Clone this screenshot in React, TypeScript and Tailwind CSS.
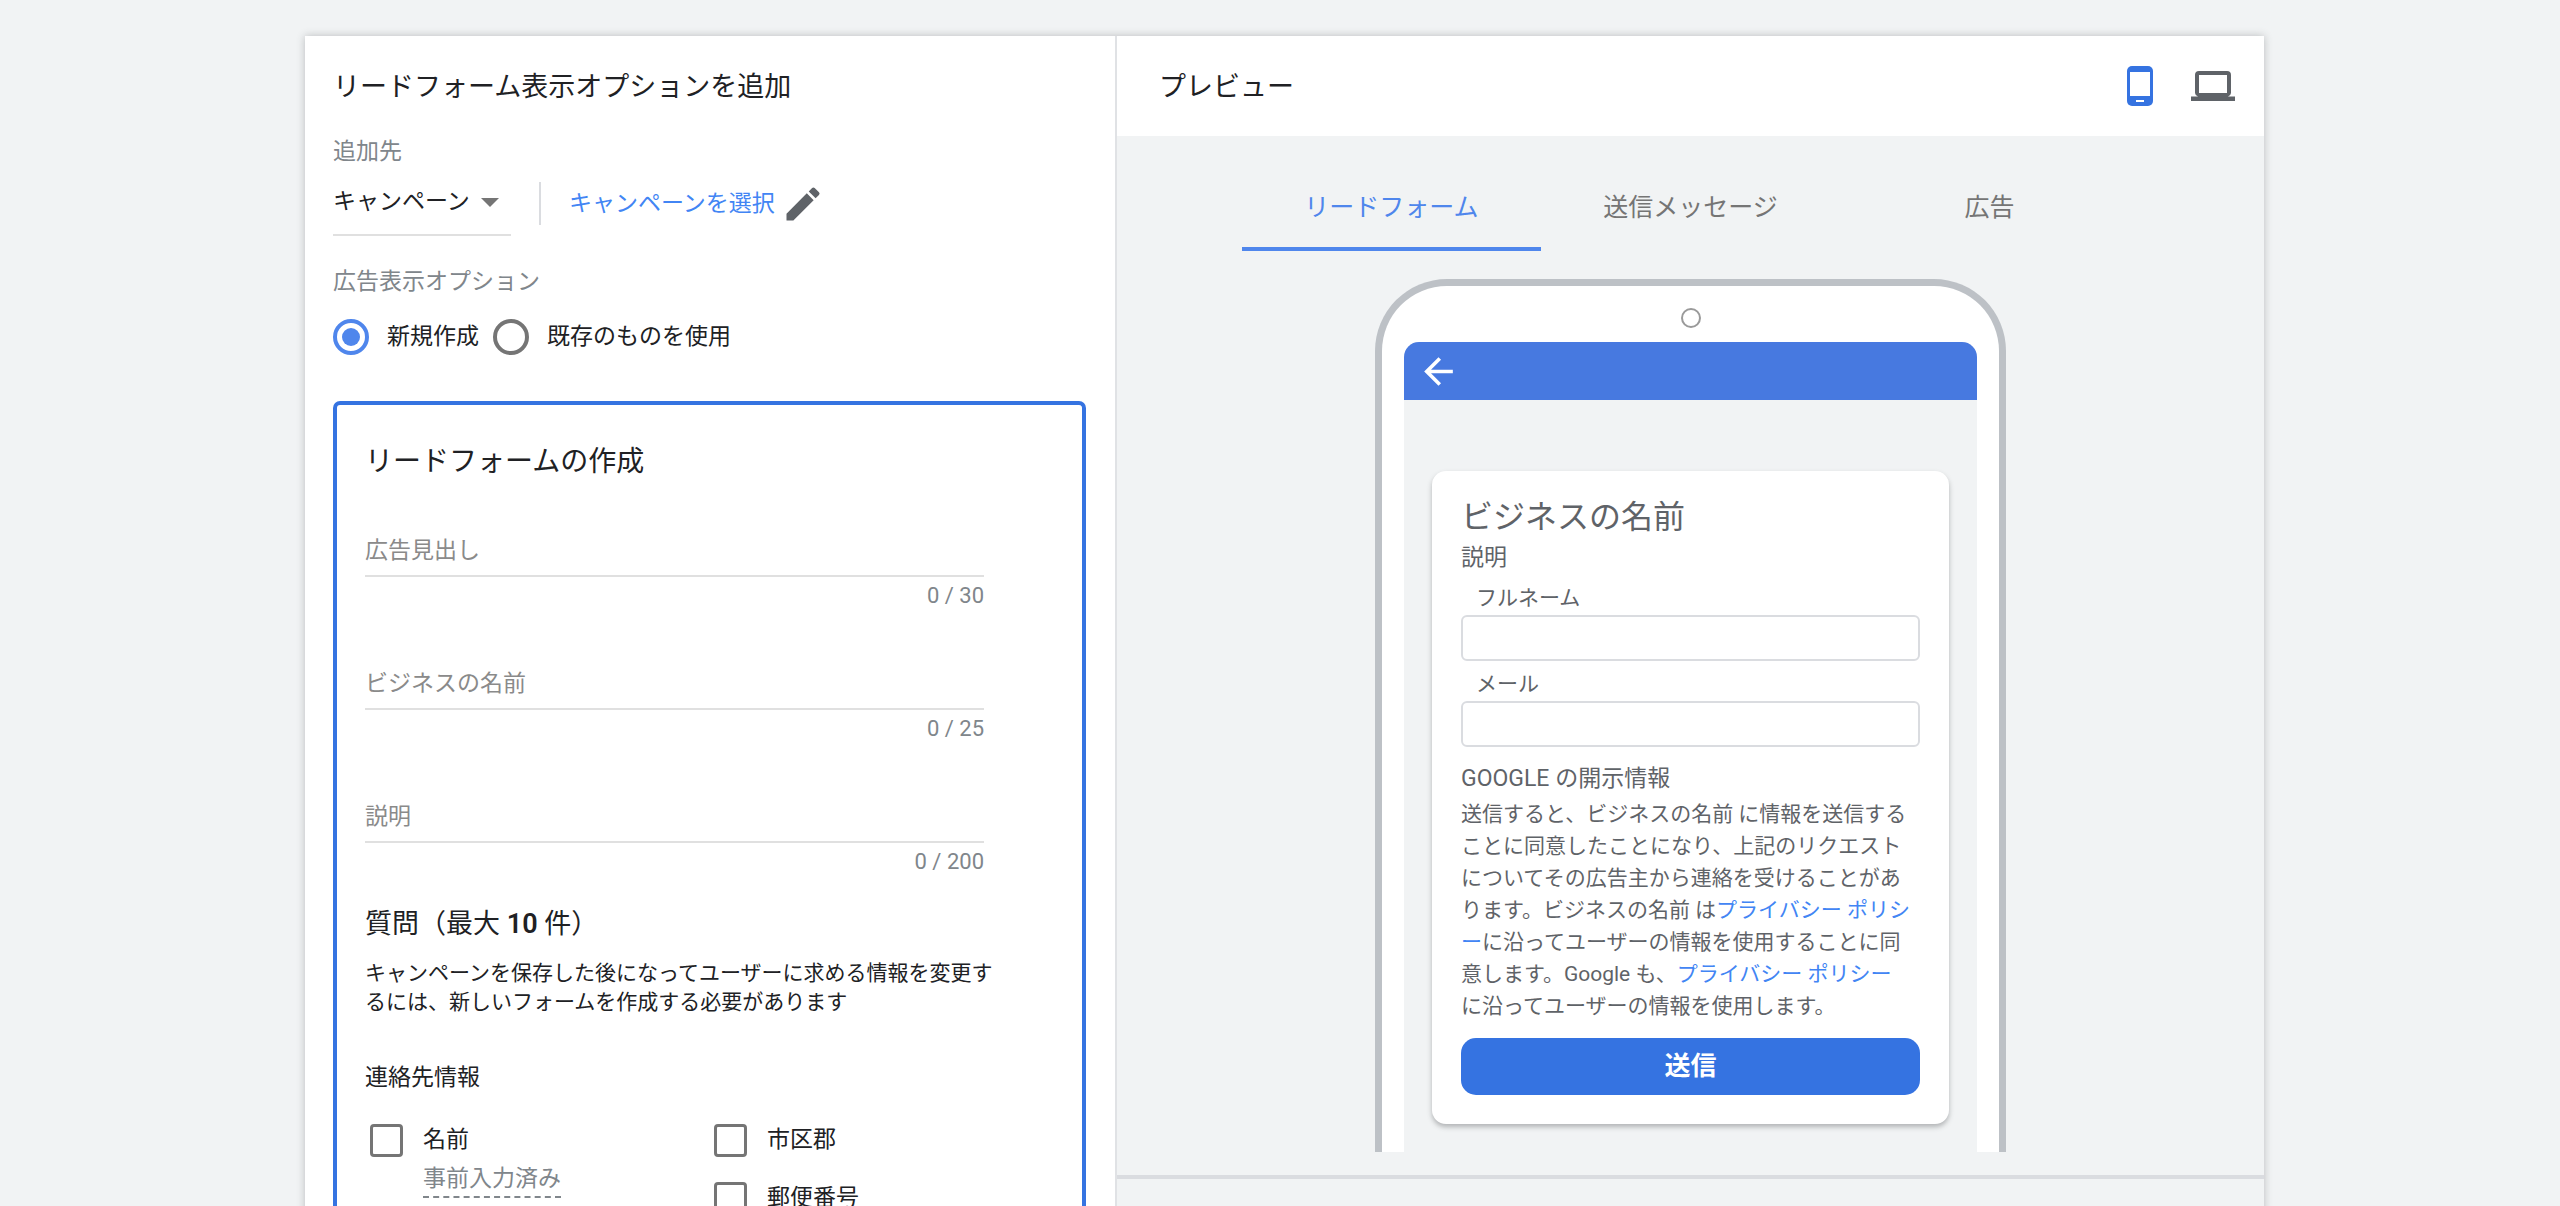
import { useId, useState } from "react";

function TextField({ label, max }: { label: string; max: number }) {
  const [value, setValue] = useState("");
  return (
    <div className="mb-[53px] w-[619px] max-w-full">
      <input
        aria-label={label}
        placeholder={label}
        maxLength={max}
        value={value}
        onChange={(e) => setValue(e.target.value)}
        className="block h-[46px] w-full border-b-2 border-[#e0e0e0] bg-transparent pb-[6px] text-[23px] outline-none placeholder:text-[#8a8a8a]"
      />
      <div className="pt-1 text-right text-[22px] leading-[30px] text-[#80868b]">
        {value.length} / {max}
      </div>
    </div>
  );
}

function Check({ label, hint }: { label: string; hint?: string }) {
  const id = useId();
  return (
    <div className="flex items-start gap-5">
      <input
        id={id}
        type="checkbox"
        className="size-[33px] shrink-0 appearance-none rounded-[4px] border-[3px] border-[#757575] checked:bg-[#3573e1]"
      />
      <div className="flex flex-col items-start">
        <label htmlFor={id} className="text-[23px] leading-8">
          {label}
        </label>
        {hint && (
          <span className="mt-[6px] border-b-2 border-dashed border-[#80868b] text-[23px] leading-[34px] text-[#80868b]">
            {hint}
          </span>
        )}
      </div>
    </div>
  );
}

function Radio({ label, checked }: { label: string; checked?: boolean }) {
  return (
    <label className="flex items-center gap-[18px] text-[23px] leading-9">
      <input
        type="radio"
        name="extension"
        defaultChecked={checked}
        className="size-9 shrink-0 appearance-none rounded-full border-4 border-[#757575] bg-clip-content p-[5px] checked:border-[#4f86ec] checked:bg-[#4f86ec]"
      />
      {label}
    </label>
  );
}

function PhoneField({ label }: { label: string }) {
  const id = useId();
  return (
    <div className="mb-2">
      <label htmlFor={id} className="block pb-[2px] pl-[15px] text-[21px] leading-[30px]">
        {label}
      </label>
      <input
        id={id}
        className="block h-[46px] w-full rounded-[6px] border-2 border-[#dadce0] bg-white px-3 text-[21px] outline-none"
      />
    </div>
  );
}

function FormPanel() {
  return (
    <section className="w-[812px] shrink-0 border-r-2 border-[#e0e2e5] bg-white pt-8 pr-[29px] pl-7">
      <h1 className="text-[27px] leading-[38px]">リードフォーム表示オプションを追加</h1>
      <div className="mt-7 text-[23px] leading-9 text-[#80868b]">追加先</div>

      <div className="mt-3 flex items-start">
        <div className="relative h-[54px] w-[178px] border-b-2 border-[#e0e0e0]">
          <select
            aria-label="追加先"
            className="h-10 w-full appearance-none bg-transparent text-[23px] outline-none"
          >
            <option>キャンペーン</option>
          </select>
          <svg
            viewBox="0 0 18 9"
            className="pointer-events-none absolute top-4 right-[12px] h-[9px] w-[18px] fill-[#757575]"
          >
            <path d="M0 0h18L9 9z" />
          </svg>
        </div>
        <div className="ml-7 h-[43px] w-[2px] bg-[#dadce0]" />
        <a href="#campaign" className="ml-7 flex items-center gap-[6px] text-[23px] leading-[42px] text-[#4285f4]">
          キャンペーンを選択
          <svg viewBox="0 0 24 24" className="size-[44px] fill-[#5f6368]">
            <path d="M3 17.25V21h3.75L17.81 9.94l-3.75-3.75L3 17.25zM20.71 7.04a1 1 0 0 0 0-1.41l-2.34-2.34a1 1 0 0 0-1.41 0l-1.83 1.83 3.75 3.75 1.83-1.83z" />
          </svg>
        </a>
      </div>

      <div className="mt-7 text-[23px] leading-9 text-[#80868b]">広告表示オプション</div>
      <div className="mt-[19px] flex gap-[14px]">
        <Radio label="新規作成" checked />
        <Radio label="既存のものを使用" />
      </div>

      <div className="mt-[46px] rounded-t-[7px] border-4 border-b-0 border-[#3573e1] px-7 pt-[37px] pb-10">
        <h2 className="mb-[49px] text-[28px] leading-10">リードフォームの作成</h2>
        <TextField label="広告見出し" max={30} />
        <TextField label="ビジネスの名前" max={25} />
        <TextField label="説明" max={200} />
        <h3 className="-mt-[25px] text-[27px] leading-[38px]">
          質問（最大 <span className="font-semibold">10</span> 件）
        </h3>
        <p className="mt-4 text-[21px] leading-[29px]">
          キャンペーンを保存した後になってユーザーに求める情報を変更す
          <br />
          るには、新しいフォームを作成する必要があります
        </p>
        <h4 className="mt-[43px] text-[23px] leading-9">連絡先情報</h4>
        <div className="mt-7 flex pl-[5px]">
          <div className="w-[344px]">
            <Check label="名前" hint="事前入力済み" />
          </div>
          <div className="flex flex-col gap-[25px]">
            <Check label="市区郡" />
            <Check label="郵便番号" />
          </div>
        </div>
      </div>
    </section>
  );
}

function PhonePreview() {
  return (
    <div className="mx-auto mt-7 w-[631px] rounded-t-[72px] border-[7px] border-b-0 border-[#bdc1c6] bg-white px-[22px] text-[#5f6368]">
      <div className="flex h-[56px] items-center justify-center pt-2">
        <span className="size-5 rounded-full border-2 border-[#9a9a9a]" />
      </div>
      <div className="rounded-t-[15px] bg-[#f1f3f4] pb-7">
        <div className="flex h-[58px] items-center rounded-t-[15px] bg-[#4779e0] px-[13px]">
          <button aria-label="戻る">
            <svg viewBox="0 0 24 24" className="size-[43px] fill-white">
              <path d="M20 11H7.83l5.59-5.59L12 4l-8 8 8 8 1.41-1.41L7.83 13H20v-2z" />
            </svg>
          </button>
        </div>
        <div className="mx-7 mt-[71px] rounded-[14px] bg-white px-[29px] pt-[23px] pb-[29px] shadow-[0_3px_5px_rgba(60,64,67,0.35)]">
          <h3 className="text-[32px] leading-[46px]">ビジネスの名前</h3>
          <p className="text-[23px] leading-9">説明</p>
          <div className="mt-[7px]">
            <PhoneField label="フルネーム" />
            <PhoneField label="メール" />
          </div>
          <p className="mt-4 text-[23px] leading-8">GOOGLE の開示情報</p>
          <p className="mt-[3px] text-[21px] leading-8 whitespace-nowrap">
            送信すると、ビジネスの名前 に情報を送信する
            <br />
            ことに同意したことになり、上記のリクエスト
            <br />
            についてその広告主から連絡を受けることがあ
            <br />
            ります。ビジネスの名前 は
            <a href="#privacy" className="text-[#4285f4]">
              プライバシー ポリシ
              <br />ー
            </a>
            に沿ってユーザーの情報を使用することに同
            <br />
            意します。Google も、
            <a href="#google-privacy" className="text-[#4285f4]">
              プライバシー ポリシー
            </a>
            <br />
            に沿ってユーザーの情報を使用します。
          </p>
          <button className="mt-4 block h-[57px] w-full rounded-[15px] bg-[#3573e1] text-[26px] leading-[57px] font-bold text-white">
            送信
          </button>
        </div>
      </div>
    </div>
  );
}

function PreviewPanel() {
  const tabs = ["リードフォーム", "送信メッセージ", "広告"];
  return (
    <section className="flex min-w-0 flex-1 flex-col bg-[#f1f3f4]">
      <header className="flex h-[100px] items-center bg-white pr-[22px] pl-[42px]">
        <h2 className="flex-1 pt-[2px] text-[27px]">プレビュー</h2>
        <button aria-label="モバイル" className="mr-[38px]">
          <svg viewBox="0 0 26 40" className="h-10 w-[26px]">
            <rect width="26" height="40" rx="5" fill="#3573e1" />
            <path fill="#fff" d="M3 6h20v24H3zM9 34h8v2H9z" />
          </svg>
        </button>
        <button aria-label="パソコン" className="mr-[7px]">
          <svg viewBox="0 0 44 30" className="h-[30px] w-11">
            <path
              fill="#5f6368"
              fillRule="evenodd"
              d="M8 0h28a4 4 0 0 1 4 4v18a4 4 0 0 1-3 3.500h7V30H0v-4.500h7A4 4 0 0 1 4 22V4a4 4 0 0 1 4-4zm0 4v18h28V4z"
            />
          </svg>
        </button>
      </header>
      <div role="tablist" className="mx-auto mt-[36px] flex">
        {tabs.map((t, i) => (
          <button
            key={t}
            role="tab"
            aria-selected={i === 0}
            className="h-[79px] w-[299px] border-b-4 border-transparent pb-1 text-[25px] text-[#757575] aria-selected:border-[#4f86ec] aria-selected:text-[#4f86ec]"
          >
            {t}
          </button>
        ))}
      </div>
      <PhonePreview />
      <div className="mt-[23px] h-1 bg-[#dadce0]" />
    </section>
  );
}

export default function App() {
  return (
    <main
      lang="ja"
      className="h-screen overflow-hidden bg-[#f1f3f4] pt-9 pr-[296px] pl-[305px] font-['Roboto','Noto_Sans_CJK_JP',sans-serif] text-[#202124]"
    >
      <div className="flex min-h-full shadow-[0_0_8px_rgba(60,64,67,0.3)]">
        <FormPanel />
        <PreviewPanel />
      </div>
    </main>
  );
}
